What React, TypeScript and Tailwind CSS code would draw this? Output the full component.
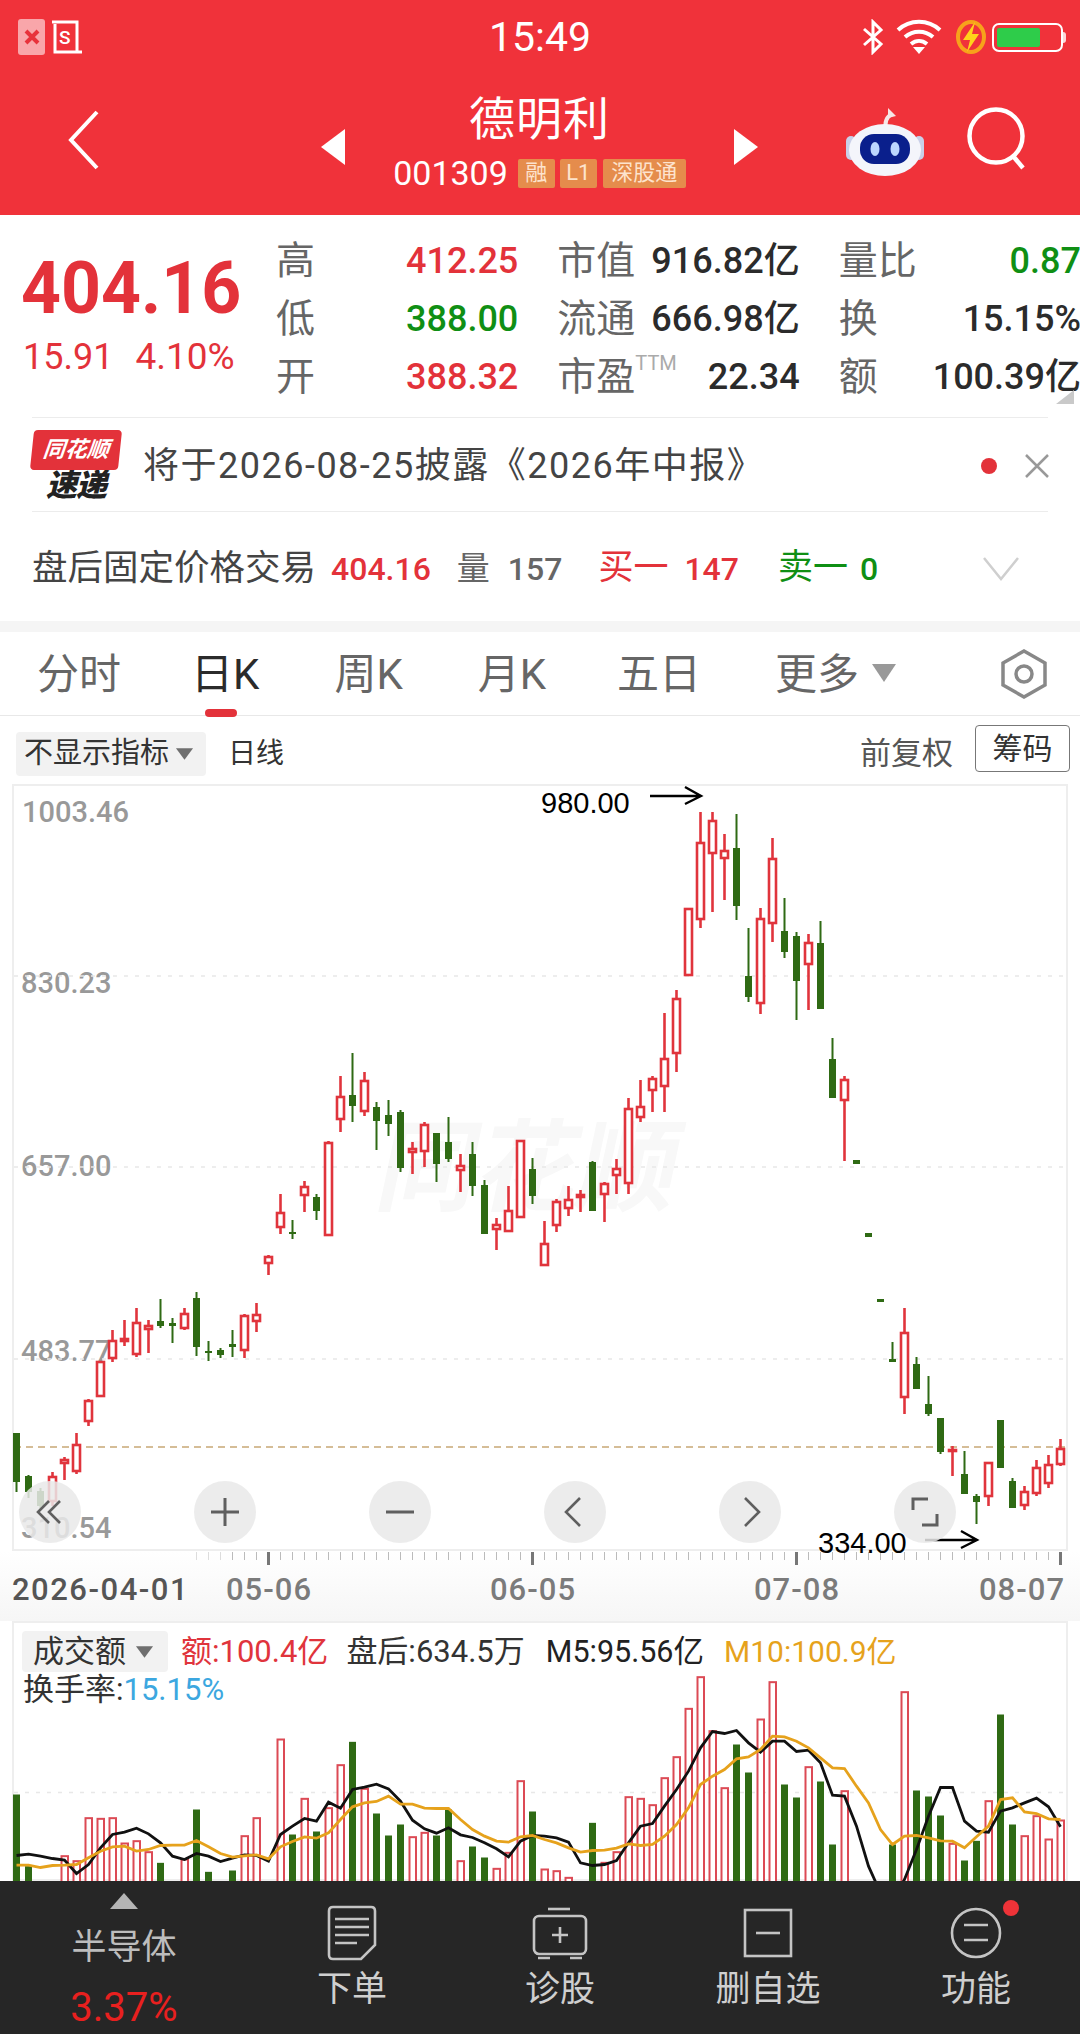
import React from 'react'

type Candle = [number, number, number, number]

const RED = '#e0343c'
const GREEN = '#2f6a14'

// [high, body top, body bottom, low] in page pixels, one per trading day
const candles: Candle[] = [
  [1434, 1434, 1483, 1493], [1476, 1477, 1493, 1499], [1489, 1492, 1507, 1510], [1473, 1477, 1503, 1507],
  [1458, 1460, 1465, 1481], [1434, 1445, 1473, 1475], [1400, 1401, 1423, 1427], [1362, 1362, 1398, 1398],
  [1331, 1341, 1360, 1363], [1321, 1339, 1343, 1347], [1309, 1323, 1356, 1358], [1321, 1326, 1331, 1354],
  [1300, 1322, 1327, 1329], [1319, 1324, 1327, 1344], [1309, 1314, 1330, 1331], [1293, 1299, 1348, 1357],
  [1342, 1352, 1354, 1362], [1349, 1351, 1356, 1359], [1331, 1345, 1348, 1358], [1315, 1316, 1352, 1359],
  [1304, 1315, 1323, 1333], [1256, 1257, 1265, 1276], [1195, 1213, 1229, 1235], [1221, 1233, 1235, 1240],
  [1182, 1187, 1197, 1213], [1195, 1198, 1212, 1221], [1142, 1143, 1237, 1237], [1077, 1097, 1121, 1133],
  [1054, 1096, 1107, 1123], [1073, 1081, 1113, 1117], [1103, 1108, 1122, 1151], [1101, 1116, 1125, 1137],
  [1111, 1113, 1169, 1173], [1143, 1149, 1154, 1175], [1123, 1125, 1153, 1168], [1134, 1134, 1165, 1183],
  [1118, 1143, 1160, 1163], [1155, 1166, 1172, 1193], [1143, 1155, 1187, 1197], [1181, 1186, 1235, 1235],
  [1219, 1225, 1231, 1251], [1187, 1211, 1233, 1233], [1141, 1141, 1219, 1219], [1159, 1170, 1197, 1205],
  [1222, 1244, 1267, 1267], [1200, 1202, 1227, 1233], [1187, 1200, 1210, 1217], [1191, 1195, 1199, 1213],
  [1162, 1163, 1212, 1212], [1183, 1184, 1196, 1223], [1160, 1169, 1177, 1195], [1099, 1109, 1185, 1195],
  [1081, 1107, 1119, 1123], [1077, 1079, 1092, 1113], [1014, 1059, 1088, 1113], [991, 999, 1055, 1073],
  [909, 909, 977, 977], [813, 843, 921, 929], [813, 821, 855, 913], [835, 851, 860, 901],
  [815, 849, 907, 921], [929, 977, 998, 1003], [909, 919, 1005, 1015], [839, 859, 925, 943],
  [899, 932, 953, 959], [933, 937, 982, 1021], [935, 943, 966, 1011], [922, 944, 1010, 1010],
  [1039, 1060, 1099, 1099], [1077, 1080, 1102, 1162], [1161, 1161, 1165, 1165], [1234, 1234, 1238, 1238],
  [1300, 1300, 1303, 1303], [1343, 1360, 1363, 1363], [1309, 1333, 1399, 1415], [1358, 1365, 1390, 1390],
  [1377, 1405, 1415, 1417], [1419, 1419, 1453, 1455], [1447, 1450, 1453, 1477], [1452, 1475, 1495, 1495],
  [1495, 1497, 1503, 1525], [1463, 1463, 1498, 1507], [1421, 1421, 1469, 1469], [1479, 1482, 1509, 1509],
  [1487, 1492, 1507, 1511], [1461, 1468, 1495, 1497], [1456, 1465, 1485, 1489], [1440, 1449, 1466, 1467],
]

const upDays = new Set([
  3, 4, 5, 6, 7, 8, 9, 10, 11, 14, 19, 20, 21, 22, 24, 26, 27, 29, 33, 34, 37, 40, 41, 42, 44, 45, 46, 47, 49, 50,
  51, 52, 53, 54, 55, 56, 57, 58, 59, 62, 63, 66, 69, 74, 78, 81, 84, 85, 86, 87,
])

// bar tops above the volume panel, 3x page pixels from y=1600; 0 = hidden by the bottom bar
const volumes = [
  585, 800, 0, 0, 770, 785, 656, 658, 656, 732, 725, 758, 790, 0, 780, 630, 817, 0, 813, 710, 656, 0, 420, 705, 598,
  696, 626, 497, 427, 568, 642, 708, 675, 713, 700, 708, 630, 785, 741, 774, 808, 760, 545, 636, 810, 815, 835, 0,
  670, 790, 758, 593, 598, 617, 536, 473, 328, 233, 395, 566, 435, 519, 360, 248, 555, 594, 503, 546, 735, 575, 0, 0,
  0, 735, 278, 573, 591, 648, 733, 783, 724, 605, 345, 675, 710, 650, 720, 663,
]
const volumeUp = new Set([
  4, 5, 6, 7, 8, 9, 10, 11, 14, 19, 20, 22, 24, 26, 27, 29, 33, 34, 37, 40, 41, 42, 44, 45, 46, 49, 50, 51, 52, 53, 54,
  55, 56, 57, 58, 59, 62, 63, 66, 69, 74, 78, 81, 84, 85, 86, 87,
])

const ma5 = [
  768, 764, 770, 777, 782, 822, 795, 745, 705, 698, 686, 703, 730, 770, 780, 762, 770, 786, 776, 766, 768, 785, 705,
  680, 657, 665, 608, 626, 570, 563, 554, 568, 605, 662, 688, 701, 685, 706, 714, 730, 748, 772, 725, 708, 710, 715,
  728, 790, 798, 795, 783, 730, 680, 672, 620, 570, 515, 445, 396, 402, 393, 430, 458, 425, 425, 456, 452, 490, 587,
  590, 680, 800, 880, 900, 840, 750, 650, 564, 564, 665, 695, 698, 635, 625, 610, 596, 622, 682,
]
const ma10 = [
  797, 797, 804, 798, 797, 795, 775, 755, 742, 740, 755, 750, 738, 737, 737, 723, 742, 762, 773, 769, 766, 778, 742,
  726, 712, 716, 700, 660, 622, 610, 606, 590, 614, 614, 626, 627, 627, 660, 690, 710, 725, 728, 712, 708, 720, 730,
  745, 758, 753, 752, 746, 733, 738, 735, 710, 675, 625, 555, 530, 510, 478, 472, 450, 410, 412, 425, 445, 475, 505,
  507, 560, 610, 690, 735, 710, 708, 715, 724, 725, 745, 712, 680, 600, 595, 637, 642, 658, 660,
]

const dayX = (i: number) => 16.5 + 12 * i
const linePoints = (values: number[]) => values.map((v, i) => `${dayX(i)},${1600 + v / 3}`).join(' ')

function CandleChart() {
  return (
    <svg viewBox="12 785 1056 767" className="absolute inset-0 h-full w-full">
      {[977, 1168, 1360].map((y) => (
        <line key={y} x1="14" x2="1066" y1={y} y2={y} stroke="#e8e8e8" strokeWidth="1.5" strokeDasharray="4 7" />
      ))}
      <line x1="14" x2="1066" y1="1448" y2="1448" stroke="#c8a876" strokeWidth="1.5" strokeDasharray="7 5" />
      {candles.map(([high, top, bottom, low], i) => {
        const x = dayX(i)
        if (upDays.has(i)) {
          return (
            <g key={i} stroke={RED} strokeWidth="2.6" fill="#fff">
              {high < top && <line x1={x} x2={x} y1={high} y2={top} />}
              {low > bottom && <line x1={x} x2={x} y1={bottom} y2={low} />}
              <rect x={x - 3.5} y={top + 1} width="7" height={Math.max(bottom - top - 2, 1)} />
            </g>
          )
        }
        return (
          <g key={i} fill={GREEN}>
            <rect x={x - 1} y={high} width="2" height={low - high} />
            <rect x={x - 3.5} y={top} width="7" height={bottom - top} />
          </g>
        )
      })}
      <g stroke="#000" strokeWidth="2.4" fill="none">
        <path d="M650 797H700M685 788L701 797L685 805" />
        <path d="M925 1541H976M961 1532L977 1541L961 1549" />
      </g>
    </svg>
  )
}

function VolumeChart() {
  return (
    <svg viewBox="12 1622 1056 259" className="absolute inset-0 h-full w-full">
      <line x1="14" x2="1066" y1="1793" y2="1793" stroke="#e8e8e8" strokeWidth="1.5" strokeDasharray="4 7" />
      {volumes.map((z, i) => {
        if (!z) return null
        const x = dayX(i)
        const y = 1600 + z / 3
        return volumeUp.has(i) ? (
          <rect key={i} x={x - 3} y={y} width="6.5" height={1890 - y} fill="#fff" stroke="#dc4a55" strokeWidth="2" />
        ) : (
          <rect key={i} x={x - 3.5} y={y} width="7" height={1890 - y} fill={GREEN} />
        )
      })}
      <polyline points={linePoints(ma5)} fill="none" stroke="#111" strokeWidth="2.8" />
      <polyline points={linePoints(ma10)} fill="none" stroke="#e6a21c" strokeWidth="2.8" />
    </svg>
  )
}

function StatCell({ label, value, color = 'text-[#2b2b2b]', sup }: { label: string; value: string; color?: string; sup?: string }) {
  return (
    <div className="flex items-center justify-between">
      <span className="whitespace-nowrap text-[39px] text-[#666]">
        {label}
        {sup && <sup className="align-[10px] text-[20px] text-[#aaa]">{sup}</sup>}
      </span>
      <span className={`whitespace-nowrap text-[36px] font-medium ${color}`}>{value}</span>
    </div>
  )
}

function Caret({ className = '' }: { className?: string }) {
  return (
    <svg viewBox="0 0 20 14" className={`h-[14px] w-[19px] ${className}`}>
      <path d="M1 1H19L10 13Z" fill="#6f6f6f" />
    </svg>
  )
}

function RoundButton({ children }: { children: React.ReactNode }) {
  return (
    <div className="flex h-[62px] w-[62px] items-center justify-center rounded-full bg-[#e9e9e9]/85">
      <svg viewBox="0 0 32 32" className="h-8 w-8" fill="none" stroke="#5f5f5f" strokeWidth="2.6">
        {children}
      </svg>
    </div>
  )
}

function BarItem({ label, icon }: { label: string; icon: React.ReactNode }) {
  return (
    <div className="flex flex-col items-center pt-[25px]">
      <div className="flex h-[54px] items-center">{icon}</div>
      <span className="mt-[10px] text-[35px] leading-[40px] text-[#cfcfcf]">{label}</span>
    </div>
  )
}

export default function App() {
  return (
    <div className="flex h-[2034px] w-[1080px] flex-col overflow-hidden bg-white font-['Roboto','Noto_Sans_CJK_SC',sans-serif]">
      <header className="h-[215px] shrink-0 bg-[#f0323a] text-white">
        <div className="grid h-[70px] grid-cols-3 items-center pt-[4px]">
          <div className="flex items-center pl-[18px]">
            <div className="flex h-[36px] w-[27px] items-center justify-center rounded-[3px] bg-[#f9a6aa]">
              <svg viewBox="0 0 16 16" className="h-4 w-4" stroke="#e8323b" strokeWidth="4">
                <path d="M2 2L14 14M14 2L2 14" />
              </svg>
            </div>
            <svg viewBox="0 0 32 36" className="ml-[6px] h-[36px] w-[32px]" fill="none" stroke="#fff" strokeWidth="3">
              <path d="M1 3H26V33H4V5M26 33H31" />
              <text x="8" y="25" fill="#fff" stroke="none" fontSize="19" fontFamily="Roboto" fontWeight="500">S</text>
            </svg>
          </div>
          <div className="text-center text-[41px] leading-none">15:49</div>
          <div className="flex items-center justify-end pr-[14px]">
            <svg viewBox="0 0 22 36" className="h-[36px] w-[22px]" fill="none" stroke="#fff" strokeWidth="3">
              <path d="M2 10L19 25L11 33V3L19 11L2 26" />
            </svg>
            <svg viewBox="0 0 46 36" className="ml-[12px] h-[36px] w-[46px]" fill="none" stroke="#fff" strokeWidth="4">
              <path d="M2 11C14 0 32 0 44 11M9 18C17 11 29 11 37 18M15 25C20 21 26 21 31 25" />
              <path d="M23 35L17 28H29Z" fill="#fff" stroke="none" />
            </svg>
            <svg viewBox="0 0 30 36" className="ml-[14px] h-[36px] w-[30px]">
              <ellipse cx="15" cy="18" rx="13" ry="15" fill="none" stroke="#f7a21b" strokeWidth="4" />
              <path d="M19 3L7 21H14L11 33L23 15H16Z" fill="#ffd31a" />
            </svg>
            <div className="ml-[6px] flex items-center">
              <div className="flex h-[29px] w-[71px] items-center rounded-[7px] border-2 border-white p-[3px]">
                <div className="h-full w-[43px] rounded-[2px] bg-[#2ecc4a]" />
              </div>
              <div className="h-[11px] w-[3px] rounded-r bg-white/80" />
            </div>
          </div>
        </div>
        <div className="grid h-[145px] grid-cols-[321px_437px_1fr]">
          <div className="pl-[66px] pt-[40px]">
            <svg viewBox="0 0 34 60" className="h-[60px] w-[34px]" fill="none" stroke="#fff" strokeWidth="4">
              <path d="M31 2L5 30L31 58" />
            </svg>
          </div>
          <div className="flex items-center justify-between pb-[3px]">
            <svg viewBox="0 0 24 36" className="mt-[12px] h-[36px] w-[24px]">
              <path d="M24 0V36L0 18Z" fill="#fff" />
            </svg>
            <div className="flex flex-col items-center">
              <div className="text-[46px] leading-[60px] tracking-[1px]">德明利</div>
              <div className="mt-[4px] flex items-center text-[34px] leading-[40px]">
                <span>001309</span>
                <span className="ml-[10px] flex h-[29px] w-[37px] items-center justify-center rounded-[2px] bg-[#e58c4c] text-[22px] text-[#fde3cd]">融</span>
                <span className="ml-[5px] flex h-[29px] w-[37px] items-center justify-center rounded-[2px] bg-[#e58c4c] text-[22px] text-[#fde3cd]">L1</span>
                <span className="ml-[6px] flex h-[29px] w-[83px] items-center justify-center rounded-[2px] bg-[#e58c4c] text-[22px] text-[#fde3cd]">深股通</span>
              </div>
            </div>
            <svg viewBox="0 0 24 36" className="mt-[12px] h-[36px] w-[24px]">
              <path d="M0 0V36L24 18Z" fill="#fff" />
            </svg>
          </div>
          <div className="flex items-start pl-[88px] pt-[36px]">
            <svg viewBox="0 0 78 70" className="h-[70px] w-[78px]">
              <path d="M40 24C38 14 42 10 46 8" fill="none" stroke="#f6e6e6" strokeWidth="4" />
              <path d="M42 2L50 10L42 12Z" fill="#f6e6e6" />
              <rect x="0" y="30" width="10" height="24" rx="5" fill="#c9cfe8" />
              <rect x="68" y="30" width="10" height="24" rx="5" fill="#c9cfe8" />
              <ellipse cx="39" cy="44" rx="36" ry="26" fill="#f4f5fb" />
              <rect x="14" y="28" width="50" height="30" rx="14" fill="#0a1f8c" />
              <ellipse cx="29" cy="43" rx="4.5" ry="7" fill="#bcd6ff" />
              <ellipse cx="49" cy="43" rx="4.5" ry="7" fill="#bcd6ff" />
            </svg>
            <svg viewBox="0 0 62 66" className="ml-[43px] mt-[-2px] h-[66px] w-[62px]" fill="none" stroke="#fff" strokeWidth="4.5">
              <circle cx="29" cy="32" r="26.5" />
              <path d="M46 52L56 64" />
            </svg>
          </div>
        </div>
      </header>

      <section className="relative flex h-[202px] shrink-0 pt-[17px]">
        <div className="w-[276px] shrink-0 pl-[21px]">
          <div className="mt-[15px] origin-left scale-x-[0.955] whitespace-nowrap text-[73px] font-bold leading-[82px] text-[#e3323a]">404.16</div>
          <div className="mt-[8px] flex pl-[2px] text-[36px] leading-[40px] text-[#e3323a]">
            <span>15.91</span>
            <span className="ml-[22px] text-[37px]">4.10%</span>
          </div>
        </div>
        <div className="grid h-[174px] w-[805px] shrink-0 grid-cols-3 grid-rows-3 gap-x-[39px]">
          <StatCell label="高" value="412.25" color="text-[#e3323a]" />
          <StatCell label="市值" value="916.82亿" />
          <StatCell label="量比" value="0.87" color="text-[#0f8f14]" />
          <StatCell label="低" value="388.00" color="text-[#0f8f14]" />
          <StatCell label="流通" value="666.98亿" />
          <StatCell label="换" value="15.15%" />
          <StatCell label="开" value="388.32" color="text-[#e3323a]" />
          <StatCell label="市盈" sup="TTM" value="22.34" />
          <StatCell label="额" value="100.39亿" />
        </div>
        <svg viewBox="0 0 18 14" className="absolute right-[6px] top-[175px] h-[14px] w-[18px]">
          <path d="M18 0V14H0Z" fill="#c9c9c9" />
        </svg>
      </section>

      <div className="mx-[32px] flex h-[95px] shrink-0 items-center border-y border-[#ececec] pt-[3px]">
        <div className="flex w-[88px] flex-col items-center">
          <div className="relative flex h-[40px] w-[88px] -skew-x-6 items-center justify-center rounded-[4px] bg-[#e3323a] text-[22px] font-bold italic leading-none text-white">
            同花顺
          </div>
          <div className="text-[31px] font-black italic leading-[32px] tracking-[-1px] text-[#222]">速递</div>
        </div>
        <span className="ml-[23px] whitespace-nowrap text-[36px] tracking-[1.5px] text-[#444]">将于2026-08-25披露《2026年中报》</span>
        <span className="ml-auto h-[16px] w-[16px] rounded-full bg-[#e3323a]" />
        <svg viewBox="0 0 26 24" className="ml-[27px] mr-[-2px] h-[24px] w-[26px]" fill="none" stroke="#999" strokeWidth="2.5">
          <path d="M2 1L24 23M24 1L2 23" />
        </svg>
      </div>

      <div className="flex h-[109px] shrink-0 items-center whitespace-nowrap pl-[32px] pt-[4px]">
        <span className="text-[35.5px] text-[#444]">盘后固定价格交易</span>
        <span className="ml-[15px] text-[32px] font-medium text-[#e3323a]">404.16</span>
        <span className="ml-[26px] text-[33px] text-[#666]">量</span>
        <span className="ml-[18px] text-[32px] font-medium text-[#666]">157</span>
        <span className="ml-[36px] text-[35px] text-[#e3323a]">买一</span>
        <span className="ml-[16px] text-[32px] font-medium text-[#e3323a]">147</span>
        <span className="ml-[39px] text-[35px] text-[#0f8f14]">卖一</span>
        <span className="ml-[12px] text-[32px] font-medium text-[#0f8f14]">0</span>
        <svg viewBox="0 0 36 24" className="ml-[105px] h-[24px] w-[36px]" fill="none" stroke="#cfcfcf" strokeWidth="2.5">
          <path d="M1 1L18 22L35 1" />
        </svg>
      </div>

      <div className="h-[11px] shrink-0 bg-[#f5f5f5]" />

      <nav className="relative flex h-[84px] shrink-0 items-center gap-x-[75px] border-b border-[#e8e8e8] pl-[37px] pt-[3px] text-[42px] leading-none text-[#666]">
        <span>分时</span>
        <span className="relative -ml-[5px] text-[#2b2b2b]">
          日K
          <span className="absolute left-[14px] top-[55px] h-[8px] w-[32px] rounded-full bg-[#e3323a]" />
        </span>
        <span>周K</span>
        <span>月K</span>
        <span className="-ml-[4px]">五日</span>
        <span className="-ml-[1px] flex items-center">
          更多
          <svg viewBox="0 0 26 20" className="ml-[12px] mt-[-4px] h-[20px] w-[26px]">
            <path d="M1 1H25L13 19Z" fill="#999" />
          </svg>
        </span>
        <svg viewBox="0 0 48 50" className="absolute left-[1000px] top-[17px] h-[50px] w-[48px]" fill="none" stroke="#888" strokeWidth="3.5">
          <path d="M24 2L45 14V36L24 48L3 36V14Z" />
          <circle cx="24" cy="25" r="8" />
        </svg>
      </nav>

      <div className="flex h-[68px] shrink-0 items-center pt-[8px] text-[#333]">
        <div className="ml-[16px] flex h-[44px] w-[190px] items-center rounded-[4px] bg-[#f2f2f2] pl-[8px] text-[29px]">
          不显示指标
          <Caret className="ml-[6px]" />
        </div>
        <span className="ml-[22px] text-[28px]">日线</span>
        <span className="ml-auto text-[31px] text-[#555]">前复权</span>
        <span className="mb-[12px] ml-[22px] mr-[10px] flex h-[47px] w-[95px] items-center justify-center rounded-[4px] border border-[#777] text-[30px]">筹码</span>
      </div>

      <div className="relative mx-[12px] h-[767px] w-[1056px] shrink-0 shadow-[inset_0_0_0_2px_#eeeeee]">
        <span className="absolute left-[10px] top-[8px] text-[29px] font-medium leading-[40px] text-[#999]">1003.46</span>
        <span className="absolute left-[9px] top-[179px] text-[29px] font-medium leading-[40px] text-[#999]">830.23</span>
        <span className="absolute left-[9px] top-[362px] text-[29px] font-medium leading-[40px] text-[#999]">657.00</span>
        <span className="absolute left-[9px] top-[547px] text-[29px] font-medium leading-[40px] text-[#999]">483.77</span>
        <span className="absolute left-[9px] top-[724px] text-[29px] font-medium leading-[40px] text-[#999]">310.54</span>
        <span className="absolute left-[368px] top-[335px] -skew-x-12 text-[100px] font-bold leading-none text-[#f8f8f8]">同花顺</span>
        <CandleChart />
        <span className="absolute left-[529px] top-[1px] font-['Liberation_Sans',sans-serif] text-[29px] leading-[36px] text-black">980.00</span>
        <span className="absolute left-[806px] top-[741px] font-['Liberation_Sans',sans-serif] text-[29px] leading-[36px] text-black">334.00</span>
        <div className="absolute left-[7px] right-[112px] top-[697px] flex justify-between">
          <RoundButton>
            <path d="M15 5L4 16L15 27M26 5L15 16L26 27" />
          </RoundButton>
          <RoundButton>
            <path d="M2 16H30M16 2V30" strokeWidth="3" />
          </RoundButton>
          <RoundButton>
            <path d="M2 16H30" strokeWidth="3" />
          </RoundButton>
          <RoundButton>
            <path d="M21 2L7 16L21 30" />
          </RoundButton>
          <RoundButton>
            <path d="M11 2L25 16L11 30" />
          </RoundButton>
          <RoundButton>
            <path d="M19 3H4V14M13 29H28V18" strokeWidth="3" />
          </RoundButton>
        </div>
      </div>

      <div className="h-[70px] shrink-0 bg-linear-to-b from-white to-[#f6f6f6]">
        <svg viewBox="0 0 1080 14" className="h-[14px] w-[1080px]">
          {candles.map((_, i) => {
            if (i < 15) return null
            const major = (i - 21) % 22 === 0
            return (
              <rect
                key={i}
                x={dayX(i) - (major ? 1.5 : 0.5)}
                y="1"
                width={major ? 3 : 1}
                height={major ? 13 : 8}
                fill={major ? '#777' : '#bbb'}
                opacity={i < 18 ? 0.5 : 1}
              />
            )
          })}
        </svg>
        <div className="flex whitespace-nowrap pl-[12px] pt-[5px] text-[31px] font-medium leading-[40px] tracking-[1px] text-[#7b7b7b]">
          <span className="w-[171px] tracking-[1.5px] text-[#555]">2026-04-01</span>
          <span className="ml-[41px] w-[90px] text-center">05-06</span>
          <span className="ml-[174px] w-[90px] text-center">06-05</span>
          <span className="ml-[174px] w-[90px] text-center">07-08</span>
          <span className="ml-[135px] w-[90px] text-center">08-07</span>
        </div>
      </div>

      <div className="relative mx-[12px] w-[1056px] flex-1 overflow-hidden shadow-[inset_0_0_0_2px_#eeeeee]">
        <VolumeChart />
        <div className="absolute left-[10px] top-[10px] flex items-center whitespace-nowrap text-[31px] leading-[41px]">
          <div className="flex h-[41px] w-[146px] items-center rounded-[4px] bg-[#f2f2f2] pl-[11px] text-[31px] text-[#333]">
            成交额
            <Caret className="ml-[9px]" />
          </div>
          <span className="ml-[13px] text-[#e0343c]">额:100.4亿</span>
          <span className="ml-[18px] text-[#333]">盘后:634.5万</span>
          <span className="ml-[21px] text-[30.5px] text-[#222]">M5:95.56亿</span>
          <span className="ml-[20px] text-[30px] text-[#e6a21c]">M10:100.9亿</span>
        </div>
        <div className="absolute left-[11px] top-[49px] whitespace-nowrap text-[31px] leading-[40px] text-[#333]">
          换手率:<span className="text-[#3ca7e0]">15.15%</span>
        </div>
      </div>

      <footer className="grid h-[153px] shrink-0 grid-cols-[248px_208px_208px_208px_208px] bg-[#262626]">
        <div className="flex flex-col items-center pt-[12px]">
          <svg viewBox="0 0 28 16" className="h-[16px] w-[28px]">
            <path d="M14 0L28 16H0Z" fill="#b5b5b5" />
          </svg>
          <span className="mt-[17px] text-[35px] leading-[44px] text-[#bdbdbd]">半导体</span>
          <span className="mt-[16px] text-[40px] leading-[44px] text-[#e8201f]">3.37%</span>
        </div>
        <BarItem
          label="下单"
          icon={
            <svg viewBox="0 0 50 56" className="h-[56px] w-[50px]" fill="none" stroke="#c4c4c4" strokeWidth="2.6">
              <path d="M6 2H44Q48 2 48 6V40L34 54H6Q2 54 2 50V6Q2 2 6 2Z" />
              <path d="M8 14H42M8 22H42M8 30H42M8 38H30" />
            </svg>
          }
        />
        <BarItem
          label="诊股"
          icon={
            <svg viewBox="0 0 56 54" className="h-[54px] w-[56px]" fill="none" stroke="#c4c4c4" strokeWidth="2.6">
              <path d="M16 3H38" />
              <rect x="2" y="10" width="52" height="38" rx="5" />
              <path d="M20 29H36M28 21V37M6 52H18M38 52H50" />
            </svg>
          }
        />
        <BarItem
          label="删自选"
          icon={
            <svg viewBox="0 0 50 50" className="h-[50px] w-[50px]" fill="none" stroke="#c4c4c4" strokeWidth="2.6">
              <rect x="2" y="2" width="46" height="46" />
              <path d="M13 25H37" />
            </svg>
          }
        />
        <BarItem
          label="功能"
          icon={
            <span className="relative block h-[52px] w-[52px]">
              <svg viewBox="0 0 52 52" className="h-[52px] w-[52px]" fill="none" stroke="#c4c4c4" strokeWidth="2.6">
                <circle cx="26" cy="26" r="24" />
                <path d="M14 18H38M14 33H38" />
              </svg>
              <span className="absolute left-[53px] top-[-7px] h-[16px] w-[16px] rounded-full bg-[#ee3338]" />
            </span>
          }
        />
      </footer>
    </div>
  )
}
